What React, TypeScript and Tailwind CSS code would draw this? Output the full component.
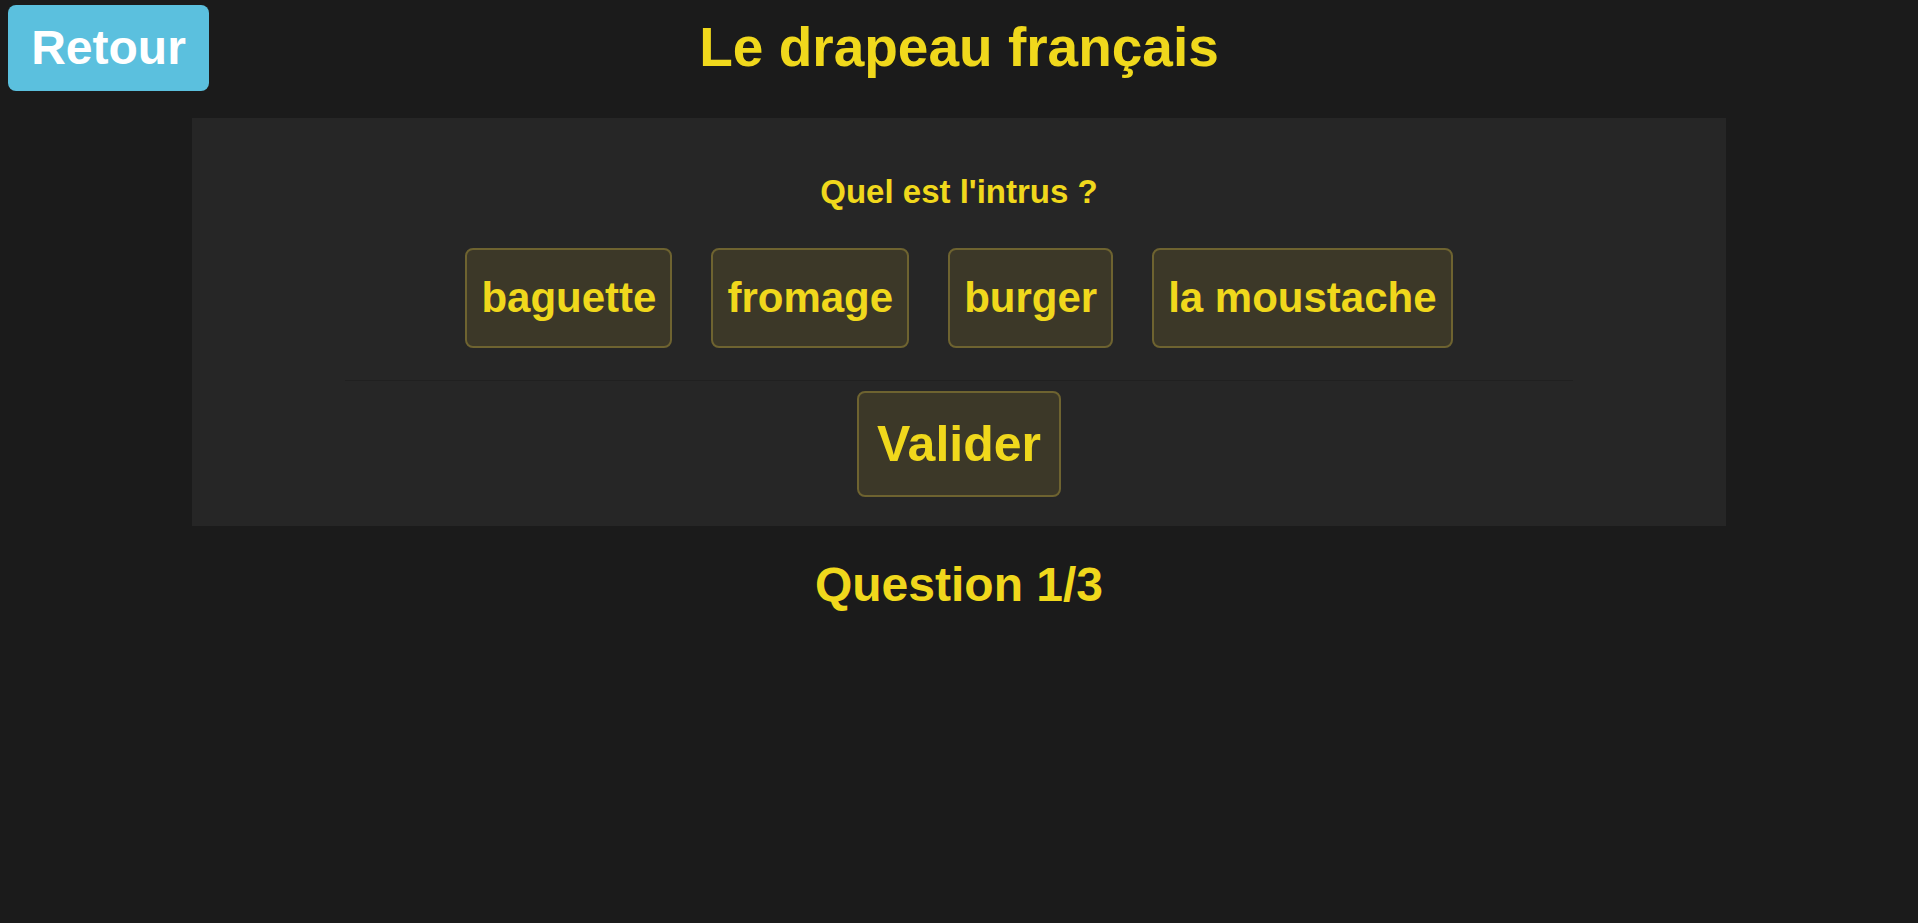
import React from "react";

const answers = ["baguette", "fromage", "burger", "la moustache"];

export default function App() {
  return (
    <div
      className="min-h-screen w-full bg-[#1b1b1b] text-[#f0d81c]"
      style={{ fontFamily: '"Liberation Sans", Arial, sans-serif' }}
    >
      <header className="grid grid-cols-[1fr_auto_1fr] items-start">
        <div>
          <button className="ml-[8px] mt-[5px] h-[86px] w-[201px] rounded-lg bg-[#5bc0de] text-[48px] font-bold leading-none text-white">
            Retour
          </button>
        </div>
        <h1 className="mt-[20px] text-[55px] font-bold leading-none">Le drapeau français</h1>
        <div />
      </header>

      <main className="mx-auto mt-[27px] flex w-[80%] flex-col items-center bg-[#262626] pb-[29px] pt-[57px]">
        <p className="text-[33px] font-bold leading-none">Quel est l'intrus ?</p>
        <div className="mt-[40px] flex gap-[39px]">
          {answers.map((a) => (
            <button
              key={a}
              className="h-[100px] rounded-lg border-2 border-[#6e6330] bg-[#3c3828] px-[14px] text-[42px] font-bold leading-none text-[#f0d81c]"
            >
              {a}
            </button>
          ))}
        </div>
        <div className="mt-[32px] h-px w-[80%] bg-[#202020]" />
        <button className="mt-[10px] h-[106px] w-[204px] rounded-lg border-2 border-[#6e6330] bg-[#3c3828] text-[50px] font-bold leading-none text-[#f0d81c]">
          Valider
        </button>
      </main>

      <p className="mt-[35px] text-center text-[48px] font-bold leading-none">Question 1/3</p>
    </div>
  );
}
